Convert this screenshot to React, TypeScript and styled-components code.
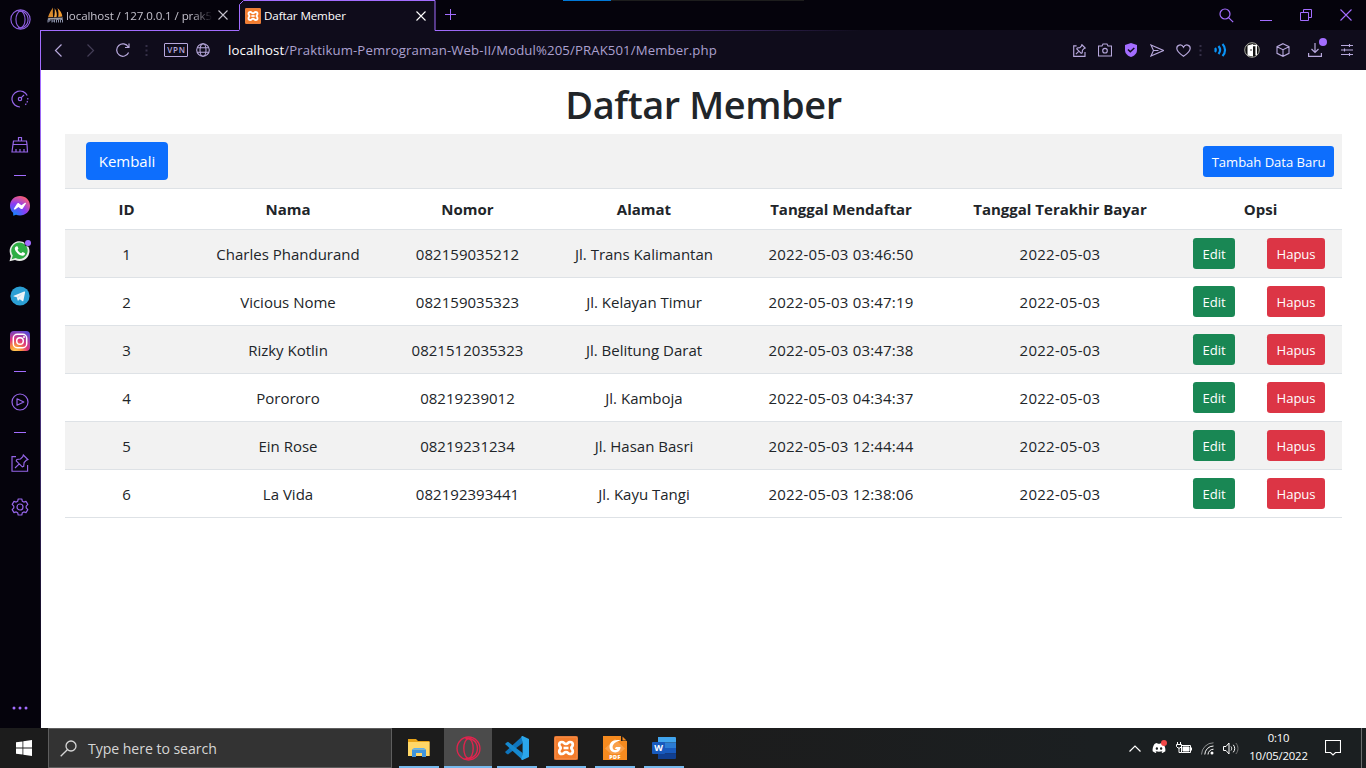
import React from "react";
import styled, { createGlobalStyle, css } from "styled-components";
import { FaDiscord } from "react-icons/fa";

const GlobalStyle = createGlobalStyle`
  * { box-sizing: border-box; }
  body {
    margin: 0;
    overflow: hidden;
    font-family: "Open Sans", "Noto Sans", sans-serif;
    color: #212529;
    background: #fff;
  }
  svg { display: block; flex: none; }
`;

const violet = "#a36dff";
const lilac = "#b7a8dc";

/* ---------- frame ---------- */
const Screen = styled.div`
  width: 1366px;
  height: 768px;
  display: flex;
  flex-direction: column;
`;
const Browser = styled.div`
  flex: 1;
  min-height: 0;
  display: flex;
  background: #05030c;
`;
const Column = styled.div`
  flex: 1;
  min-width: 0;
  display: flex;
  flex-direction: column;
`;

/* ---------- side bar ---------- */
const SideBar = styled.nav`
  width: 40px;
  display: flex;
  flex-direction: column;
  color: #9565e8;
  padding-bottom: 10px;
`;
const SideSlot = styled.div<{ $h: number; $gap?: number; $last?: boolean }>`
  height: ${(p) => p.$h}px;
  margin-top: ${(p) => (p.$last ? "auto" : `${p.$gap ?? 0}px`)};
  display: flex;
  align-items: center;
  justify-content: center;
  flex: none;
`;
const SideDash = styled.span`
  width: 12px;
  height: 1px;
  background: ${violet};
`;
const SideEdge = styled.div`
  width: 1px;
  margin-top: 30px;
  background: linear-gradient(${violet} 0, ${violet} 60px, #3b2a68 430px, #0b0716 640px);
`;

/* ---------- tab strip ---------- */
const TabStrip = styled.div`
  height: 31px;
  display: flex;
  position: relative;
  flex: none;
`;
const Tab = styled.div<{ $active?: boolean }>`
  width: ${(p) => (p.$active ? 197 : 198)}px;
  height: 31px;
  display: flex;
  align-items: center;
  position: relative;
  padding: 0 10px 0 6px;
  font-size: 11.6px;
  letter-spacing: -0.1px;
  color: ${(p) => (p.$active ? "#fff" : "#c4c1cc")};
  ${(p) => !p.$active && css`border-bottom: 1px solid ${violet};`}
`;
const TabShape = styled.svg`
  position: absolute;
  inset: 0;
`;
const TabTitle = styled.span<{ $fade?: boolean }>`
  position: relative;
  flex: 1;
  margin-left: 3px;
  white-space: nowrap;
  ${(p) => p.$fade && css`
    flex: none;
    width: 148px;
    margin-left: 2px;
    margin-right: 4px;
    mask-image: linear-gradient(90deg, #000 126px, transparent 147px);
  `}
`;
const TabIcon = styled.span`
  position: relative;
  display: flex;
`;
const StripRest = styled.div`
  flex: 1;
  display: flex;
  align-items: center;
  padding-left: 9px;
  color: ${violet};
  border-bottom: 1px solid;
  border-image: linear-gradient(90deg, ${violet}, #5c3d98 190px, #0f0c1b 425px) 1;
`;
const PlusSlot = styled.span`
  display: flex;
  padding-bottom: 2px;
`;
const TopProgress = styled.div`
  position: absolute;
  top: 0;
  left: 522px;
  width: 241px;
  height: 1px;
  background: linear-gradient(90deg, #0078d7 48px, #1d1d1d 48px);
`;
const WindowButtons = styled.div`
  display: flex;
  margin-left: auto;
`;
const WindowButton = styled.span`
  width: 40px;
  height: 28px;
  display: flex;
  align-items: center;
  justify-content: center;
`;

/* ---------- address bar ---------- */
const AddressBar = styled.div`
  height: 39px;
  display: flex;
  align-items: center;
  padding: 0 4px 1px 0;
  background: #0f0c1b;
  color: ${lilac};
  flex: none;
`;
const ToolSlot = styled.span<{ $w: number; $dim?: boolean }>`
  width: ${(p) => p.$w}px;
  height: 38px;
  display: flex;
  align-items: center;
  justify-content: center;
  position: relative;
  flex: none;
  color: ${(p) => (p.$dim ? "#443e57" : "inherit")};
`;
const Vpn = styled.span`
  width: 24px;
  height: 14px;
  margin-left: 11px;
  border: 1px solid ${lilac};
  border-radius: 1px;
  font-size: 8px;
  font-weight: 600;
  line-height: 12px;
  letter-spacing: 0.7px;
  text-align: center;
  padding-left: 1px;
`;
const Url = styled.span`
  margin-left: 10px;
  flex: 1;
  font-size: 13.2px;
  letter-spacing: 0.11px;
  line-height: 18px;
  padding-bottom: 1px;
  white-space: nowrap;
  color: #aba0cf;
  b { font-weight: 400; color: #fff; }
`;
const Dot = styled.i`
  position: absolute;
  top: 7px;
  right: 5px;
  width: 8px;
  height: 8px;
  border-radius: 50%;
  background: ${violet};
`;

/* ---------- page ---------- */
const Page = styled.main`
  flex: 1;
  background: #fff;
  padding: 10px 24px 0;
`;
const Title = styled.h1`
  margin: 0 0 6px;
  height: 48px;
  line-height: 48px;
  font-size: 38px;
  font-weight: 600;
  letter-spacing: -0.45px;
  text-align: center;
`;
const Table = styled.table`
  width: 1277px;
  table-layout: fixed;
  border-collapse: separate;
  border-spacing: 0;
  font-size: 15px;
  line-height: 24px;
  text-align: center;
`;
const Row = styled.tr<{ $striped?: boolean; $h: number }>`
  height: ${(p) => p.$h}px;
  background: ${(p) => (p.$striped ? "#f2f2f2" : "#fff")};
`;
const cell = css`
  padding: 0;
  border-bottom: 1px solid #dee2e6;
  vertical-align: middle;
  white-space: nowrap;
`;
const Head = styled.th`
  ${cell}
  font-weight: 700;
`;
const Cell = styled.td<{ $spacing?: number }>`
  ${cell}
  letter-spacing: ${(p) => p.$spacing ?? 0}px;
`;
const Actions = styled.div<{ $ends?: boolean }>`
  display: flex;
  align-items: center;
  justify-content: space-between;
  padding: ${(p) => (p.$ends ? "0 8px 0 21px" : "0 17px 0 14px")};
`;
const tones = { primary: "#0d6efd", success: "#198754", danger: "#dc3545" };
const Button = styled.button<{ $tone: keyof typeof tones; $w: number; $large?: boolean }>`
  width: ${(p) => p.$w}px;
  height: ${(p) => (p.$large ? 38 : 31)}px;
  padding: ${(p) => (p.$large ? 0 : "1px 0 0")};
  border: 0;
  border-radius: ${(p) => (p.$large ? 4 : 3.2)}px;
  background: ${(p) => tones[p.$tone]};
  color: #fff;
  font-family: inherit;
  font-size: ${(p) => (p.$large ? 15 : 13.1)}px;
  letter-spacing: ${(p) => (p.$large ? 0 : -0.05)}px;
  white-space: nowrap;
`;

/* ---------- task bar ---------- */
const TaskBar = styled.footer`
  height: 40px;
  display: flex;
  background: linear-gradient(90deg, #1c1c1c 50%, #1b1f21 80%);
  color: #fff;
  flex: none;
`;
const Start = styled.div`
  width: 48px;
  display: flex;
  align-items: center;
  justify-content: center;
`;
const SearchBox = styled.div`
  width: 344px;
  border: 1px solid #5e5e5e;
  background: #333;
  display: flex;
  align-items: center;
  padding-left: 11px;
  gap: 11px;
  font-size: 14.1px;
  letter-spacing: -0.05px;
  color: #d6d6d6;
`;
const Apps = styled.div`
  display: flex;
  gap: 1px;
  margin-left: 3px;
`;
const AppButton = styled.div<{ $active?: boolean }>`
  width: 48px;
  display: flex;
  flex-direction: column;
  align-items: center;
  background: ${(p) => (p.$active ? "#4b4b4b" : "transparent")};
  &::after {
    content: "";
    width: ${(p) => (p.$active ? 48 : 40)}px;
    height: 2px;
    background: #76b9ed;
  }
`;
const AppIcon = styled.span`
  flex: 1;
  display: flex;
  align-items: center;
  padding-top: 2px;
`;
const Tray = styled.div`
  display: flex;
  margin-left: auto;
  align-items: center;
`;
const TraySlot = styled.span<{ $w: number }>`
  width: ${(p) => p.$w}px;
  display: flex;
  align-items: center;
  justify-content: center;
  position: relative;
`;
const Alert = styled.i`
  position: absolute;
  top: -1px;
  right: 4px;
  width: 6px;
  height: 6px;
  border-radius: 50%;
  background: #f04747;
`;
const Clock = styled.div`
  width: 70px;
  font-size: 11.3px;
  letter-spacing: -0.15px;
  line-height: 18px;
  text-align: center;
  padding: 0 0 2px 1px;
`;
const Peek = styled.div`
  width: 5px;
  height: 40px;
  margin-left: 8px;
  border-left: 1px solid #6b6d6e;
`;

/* ---------- line icons ---------- */
type LineProps = { w: number; h: number; sw?: number; color?: string; children: React.ReactNode };
const Line = ({ w, h, sw = 1.2, color = "currentColor", children }: LineProps) => (
  <svg width={w} height={h} viewBox={`0 0 ${w} ${h}`} fill="none" stroke={color} strokeWidth={sw}>
    {children}
  </svg>
);

const OperaMark = ({ size, color, inner }: { size: number; color: string; inner: number }) => (
  <svg width={size} height={size} viewBox="0 0 24 24" fill="none" stroke={color} strokeWidth={1.3}>
    <circle cx="12" cy="12" r="11" />
    <ellipse cx="12" cy="12" rx={inner} ry="9.4" />
    <path d="M9 2.6C14 .8 20.6 5 20.6 12S14 23.2 9 21.4" />
  </svg>
);

const Cross = ({ size, color }: { size: number; color?: string }) => (
  <Line w={size} h={size} color={color} sw={1.1}>
    <path d={`M.5 .5L${size - 0.5} ${size - 0.5}M${size - 0.5} .5L.5 ${size - 0.5}`} />
  </Line>
);

const PinBox = ({ size }: { size: number }) => (
  <svg width={size} height={size} viewBox="0 0 18 18" fill="none" stroke="currentColor" strokeWidth={(18 / size) * 1.15}>
    <path d="M5 2.6H1v14.6h15.6V11" />
    <path d="M12.3 1l4.6 4.6-1.4.5-2.4 2.5-.4 3.7-1.4.6-6.1-6.1.7-1.3 3.6-.5 2.3-2.4zM8.3 9.8L4 14" />
  </svg>
);

const Sail = () => (
  <svg width="17" height="16" viewBox="0 0 17 16">
    <path d="M6 .5C4 3.5 2.2 6.5 1 10.2L6.2 10C5.8 6.5 5.8 3 6 .5z" fill="#d98a2b" />
    <path d="M7.6 1.2c2 2.6 2.6 5.5 2 8.8L7 10.2C7.8 7 8 4 7.6 1.2z" fill="#f0a544" />
    <path d="M10.5 1c2.9 2.5 4.5 5.3 4.9 8.6l-4.2.4c.6-3 .3-6-.7-9z" fill="#f29a2e" />
    <path d="M.5 11l15.6-.6-1 2.2H2z" fill="#9a9aa0" />
    <path d="M1 15.5v-3h2v1.500H1m4-1.500v3m2.500-3v3M5 14h2.500m2 1.500v-3h2v3m2 0v-3h2v3" stroke="#8a90a8" fill="none" />
  </svg>
);

const XamppTile = ({ size }: { size: number }) => (
  <svg width={size} height={size} viewBox="0 0 24 24">
    <rect width="24" height="24" rx="1.5" fill="#dd6a26" />
    <rect x="1" y="1" width="22" height="22" rx="1.5" fill="#f47c2c" stroke="#f9a56b" strokeWidth=".6" />
    <path
      d="M8 6c2.200 0 1.800 2 4 2s1.800-2 4-2c1.700 0 2.800 1.200 2.800 2.800 0 1.800-1.500 2-1.500 3.200s1.500 1.400 1.500 3.200c0 1.600-1.100 2.800-2.800 2.800-2.200 0-1.800-2-4-2s-1.800 2-4 2c-1.700 0-2.800-1.200-2.800-2.800 0-1.800 1.500-2 1.500-3.200S5.200 10.600 5.200 8.800C5.200 7.200 6.300 6 8 6z"
      fill="none" stroke="#fff" strokeWidth="2.700"
    />
    <path d="M9.500 12h5" stroke="#fff" strokeWidth="2.600" />
  </svg>
);

const Grip = () => (
  <svg width="3" height="11" viewBox="0 0 3 11" fill="#352f47">
    <path d="M.5 0h2v2h-2zM.5 4.500h2v2h-2zM.5 9h2v2h-2z" />
  </svg>
);

const Messenger = () => (
  <svg width="20" height="20" viewBox="0 0 20 20">
    <defs>
      <radialGradient id="msg" cx=".2" cy="1" r="1.100">
        <stop offset="0" stopColor="#0a8bff" />
        <stop offset=".55" stopColor="#8a3cf5" />
        <stop offset="1" stopColor="#ff5f70" />
      </radialGradient>
    </defs>
    <path d="M10 0C4.400 0 0 4.100 0 9.700c0 2.900 1.200 5.400 3.100 7.100l.2 3 2.700-1c1.200.4 2.600.6 4 .6 5.600 0 10-4.100 10-9.700S15.600 0 10 0z" fill="url(#msg)" />
    <path d="M4 12.500l3-4.700c.5-.7 1.400-.9 2.100-.4l2.300 1.800 3.300-2.300c.8-.5 1.600.2 1.100.9l-3 4.600c-.5.7-1.400.9-2.100.4L8.500 11l-3.400 2.400c-.8.500-1.600-.2-1.100-.9z" fill="#fff" />
  </svg>
);

const WhatsApp = () => (
  <svg width="22" height="22" viewBox="0 0 22 22">
    <path d="M.5 21.300l1.400-5.400A9.900 9.900 0 1 1 6 19.900z" fill="#e9ece9" />
    <path d="M2.700 19.200l1.100-3.700A8.200 8.200 0 1 1 6.700 18z" fill="#2fae45" />
    <path d="M7.900 6.300c.4 0 .6 0 .8.500l.7 1.600c.2.400-.7 1.200-.8 1.500.8 1.600 2 2.700 3.600 3.400.4.100 1.100-1.200 1.500-1.200l2 .9c.5.200.2 1.500-.2 2-1.100 1.200-3 .8-4.700 0-2.300-1.100-5-4.200-5-6.400 0-1 .9-2.300 2.100-2.300z" fill="#fff" />
    <circle cx="19" cy="3" r="3.600" fill="#05030c" />
    <circle cx="19" cy="3" r="3" fill={violet} />
  </svg>
);

const Telegram = () => (
  <svg width="20" height="20" viewBox="0 0 20 20">
    <circle cx="10" cy="10" r="9.600" fill="#2b9fd4" />
    <path d="M3.800 9.800l10.400-4.300c.7-.2 1 .1.900.8l-1.700 8.400c-.2.700-.6.800-1.200.4l-2.500-1.800-1.300 1.200c-.4.400-.7.200-.8-.2l-.8-3.100-2.900-.7c-.5-.2-.6-.5-.1-.7z" fill="#eef4f8" />
    <path d="M7.200 11.200l5.200-3.600-4.200 4.200z" fill="#b9d5e4" />
  </svg>
);

const Instagram = () => (
  <svg width="20" height="20" viewBox="0 0 20 20" fill="none">
    <defs>
      <radialGradient id="ig" cx=".25" cy="1.050" r="1.150">
        <stop offset="0" stopColor="#ffd35a" />
        <stop offset=".25" stopColor="#fb9a3c" />
        <stop offset=".55" stopColor="#e0357a" />
        <stop offset="1" stopColor="#5b4ad6" />
      </radialGradient>
    </defs>
    <rect width="20" height="20" rx="4" fill="url(#ig)" />
    <rect x="3.300" y="3.300" width="13.400" height="13.400" rx="4" stroke="#fff" strokeWidth="1.500" />
    <circle cx="10" cy="10" r="3.300" stroke="#fff" strokeWidth="1.500" />
    <circle cx="14" cy="6" r="1" fill="#fff" />
  </svg>
);

const Gear = () => (
  <svg width="18" height="18" viewBox="0 0 18 18" fill="none" stroke="currentColor" strokeWidth="1.200" strokeLinejoin="round">
    <path d="M7.200 1h3.600l.5 2.200 1.500.9 2.200-.7 1.800 3-1.600 1.700v1.800l1.600 1.700-1.800 3-2.200-.7-1.500.9-.5 2.200H7.200l-.5-2.200-1.500-.9-2.200.7-1.800-3 1.600-1.700V8.100L1.200 6.400l1.800-3 2.200.7 1.500-.9z" />
    <circle cx="9" cy="9" r="3" />
  </svg>
);

/* ---------- task bar pictures ---------- */
const Folder = () => (
  <svg width="22" height="20" viewBox="0 0 22 20">
    <path d="M0 1h8l2 2h11.500v15H0z" fill="#e8a317" />
    <path d="M0 4h21.500v14H0z" fill="#ffd767" />
    <path d="M4 11.500h14V19h-4v-4H8v4H4z" fill="#3f95dc" />
    <path d="M4 11.500l2-1.500h10l2 1.500z" fill="#5fb0ee" />
  </svg>
);
const Code = () => (
  <svg width="24" height="24" viewBox="0 0 24 24">
    <path d="M17.600 0v7L3 18.400 1.400 17.600 0 16z" fill="#0f75bd" />
    <path d="M0 8l1.600-1.600L3 5.800 17.600 17v7z" fill="#1689cf" />
    <path d="M17.600 0L24 3v18l-6.400 3c-.8 0-1.200-.4-1.300-1l1.300-5V6.500l-1.300-5.400c.1-.7.500-1.100 1.300-1.100z" fill="#2ba6ea" />
  </svg>
);
const FoxitPdf = () => (
  <svg width="24" height="24" viewBox="0 0 24 24">
    <path d="M0 0h18v5h6v19H0z" fill="#f58a1f" />
    <path d="M19.500.5l4 4h-4z" fill="#f58a1f" />
    <path d="M2 12.500L12 3l10 9.500L16 18H8z" fill="#f9a04a" />
    <path d="M17.500 4.500C11 3 6.500 6 6.500 10.800c0 3.600 2.700 5.600 5.700 5.600 3.300 0 5.300-2.200 5.300-5.400h-4.600l-1 2h2.300c-.5.800-1.200 1.100-2.100 1.100-1.500 0-2.500-1.100-2.500-2.900 0-3.200 3-5.600 7.900-6.700z" fill="#fff" />
    <text x="12" y="22.600" textAnchor="middle" fontSize="5.500" fontWeight="800" fill="#fff" letterSpacing=".4">PDF</text>
  </svg>
);
const Word = () => (
  <svg width="24" height="22" viewBox="0 0 24 22">
    <path d="M6 0h17a1 1 0 0 1 1 1v4.500H6z" fill="#41a5ee" />
    <path d="M6 5.500h18V11H6z" fill="#2b7cd3" />
    <path d="M6 11h18v5.500H6z" fill="#185abd" />
    <path d="M6 16.500h18V21a1 1 0 0 1-1 1H6z" fill="#103f91" />
    <rect y="5" width="13" height="12" rx="1" fill="#185abd" />
    <text x="6.500" y="14.300" textAnchor="middle" fontSize="9" fontWeight="700" fill="#fff">W</text>
  </svg>
);

/* ---------- data ---------- */
const columns: [string, number][] = [
  ["ID", 123], ["Nama", 200], ["Nomor", 159], ["Alamat", 194],
  ["Tanggal Mendaftar", 200], ["Tanggal Terakhir Bayar", 238], ["Opsi", 163],
];
const members = [
  ["1", "Charles Phandurand", "082159035212", "Jl. Trans Kalimantan", "2022-05-03 03:46:50", "2022-05-03"],
  ["2", "Vicious Nome", "082159035323", "Jl. Kelayan Timur", "2022-05-03 03:47:19", "2022-05-03"],
  ["3", "Rizky Kotlin", "0821512035323", "Jl. Belitung Darat", "2022-05-03 03:47:38", "2022-05-03"],
  ["4", "Porororo", "08219239012", "Jl. Kamboja", "2022-05-03 04:34:37", "2022-05-03"],
  ["5", "Ein Rose", "08219231234", "Jl. Hasan Basri", "2022-05-03 12:44:44", "2022-05-03"],
  ["6", "La Vida", "082192393441", "Jl. Kayu Tangi", "2022-05-03 12:38:06", "2022-05-03"],
];
const spacings = [0, 0, 0.03, 0, 0.18, 0.25];

const Side = () => (
  <SideBar>
    <SideSlot $h={39}><OperaMark size={21} color="#8e5fe0" inner={5.2} /></SideSlot>
    <SideSlot $h={46} $gap={37}>
      <Line w={18} h={18}>
        <path d="M9 17A8 8 0 1 1 16.200 5.500" />
        <path d="M16.800 8v1.500m-.3 1.500l-.5 1.500m-.7 1.200l-1 1.200" />
        <circle cx="9" cy="9" r="1.700" /><path d="M10.300 7.700L13 5" />
      </Line>
    </SideSlot>
    <SideSlot $h={45}>
      <Line w={18} h={17}>
        <path d="M7.500 5V1.500h3V5M2.500 5h13l.5 3.500H2zM2 8.500L1 16h15.500l-.5-7.500M5 16v-3m4 3v-3m4 3v-3" />
      </Line>
    </SideSlot>
    <SideSlot $h={16}><SideDash /></SideSlot>
    <SideSlot $h={46}><Messenger /></SideSlot>
    <SideSlot $h={44}><WhatsApp /></SideSlot>
    <SideSlot $h={46}><Telegram /></SideSlot>
    <SideSlot $h={44}><Instagram /></SideSlot>
    <SideSlot $h={17}><SideDash /></SideSlot>
    <SideSlot $h={44}>
      <Line w={18} h={18}><circle cx="9" cy="9" r="8" /><path d="M6 5.800L12.800 9 6 12.200z" strokeLinejoin="round" /></Line>
    </SideSlot>
    <SideSlot $h={17}><SideDash /></SideSlot>
    <SideSlot $h={44}><PinBox size={18} /></SideSlot>
    <SideSlot $h={44}><Gear /></SideSlot>
    <SideSlot $h={20} $last>
      <svg width="16" height="4" viewBox="0 0 16 4" fill={violet}>
        <circle cx="2" cy="2" r="1.500" /><circle cx="8" cy="2" r="1.500" /><circle cx="14" cy="2" r="1.500" />
      </svg>
    </SideSlot>
  </SideBar>
);

const Tabs = () => (
  <TabStrip>
    <Tab>
      <TabIcon><Sail /></TabIcon>
      <TabTitle $fade>localhost / 127.0.0.1 / prak5</TabTitle>
      <Cross size={10} />
    </Tab>
    <Tab $active>
      <TabShape width="197" height="31" viewBox="0 0 197 31">
        <path d="M.5 31V4.500L4.500.5h191.500V31z" fill="#0f0c1b" />
        <path d="M0 30.500L.5 29.500V4.500L4.500.5h191.500v30h1" fill="none" stroke={violet} />
      </TabShape>
      <TabIcon><XamppTile size={16} /></TabIcon>
      <TabTitle>Daftar Member</TabTitle>
      <TabIcon><Cross size={10} color="#fff" /></TabIcon>
    </Tab>
    <StripRest>
      <PlusSlot><Line w={11} h={11} sw={1}><path d="M5.500 0v11M0 5.500h11" /></Line></PlusSlot>
      <WindowButtons>
        <WindowButton><Line w={15} h={15}><circle cx="6" cy="6" r="5" /><path d="M9.600 9.600l4.600 4.600" /></Line></WindowButton>
        <WindowButton><Line w={12} h={12} sw={1}><path d="M0 11.500h12" /></Line></WindowButton>
        <WindowButton><Line w={12} h={12} sw={1}><path d="M.5 3.500h8v8h-8zM3.500 3.500v-3h8v8h-3" /></Line></WindowButton>
        <WindowButton><Cross size={12} /></WindowButton>
      </WindowButtons>
    </StripRest>
    <TopProgress />
  </TabStrip>
);

const Address = () => (
  <AddressBar>
    <ToolSlot $w={34}><Line w={8} h={13}><path d="M7.500.5l-6 6 6 6" /></Line></ToolSlot>
    <ToolSlot $w={32} $dim><Line w={8} h={13}><path d="M.5.5l6 6-6 6" /></Line></ToolSlot>
    <ToolSlot $w={32}><Line w={14} h={14}><path d="M12.600 9.500A6.200 6.200 0 1 1 12.300 4M13 .5V4.500H9" /></Line></ToolSlot>
    <ToolSlot $w={14}><Grip /></ToolSlot>
    <Vpn>VPN</Vpn>
    <ToolSlot $w={30}>
      <Line w={14} h={14} sw={1.100}>
        <circle cx="7" cy="7" r="6.300" /><ellipse cx="7" cy="7" rx="3" ry="6.300" /><path d="M1.200 4.700h11.600M1.200 9.300h11.600" />
      </Line>
    </ToolSlot>
    <Url><b>localhost</b>/Praktikum-Pemrograman-Web-II/Modul%205/PRAK501/Member.php</Url>
    <ToolSlot $w={26}><PinBox size={13} /></ToolSlot>
    <ToolSlot $w={26}>
      <Line w={14} h={14} sw={1.100}><path d="M.5 3h3.500l1-2h4l1 2h3.500v10H.5z" /><circle cx="7" cy="7.700" r="2.300" /></Line>
    </ToolSlot>
    <ToolSlot $w={26}>
      <svg width="12" height="14" viewBox="0 0 12 14"><path d="M6 0l6 2v5c0 3.500-2.500 5.800-6 7-3.500-1.200-6-3.500-6-7V2z" fill={violet} /><path d="M3 6.500l2.300 2.300L9.300 5" fill="none" stroke="#0f0c1b" strokeWidth="1.500" /></svg>
    </ToolSlot>
    <ToolSlot $w={26}><Line w={14} h={13} sw={1.100}><path d="M1 1l12.500 5.500L1 12l2.500-5.500zM3.500 6.500h5" /></Line></ToolSlot>
    <ToolSlot $w={26}><Line w={15} h={13}><path d="M7.500 12.200C3.500 9.500.8 7 .8 4.200.8 1 5.500-.6 7.500 3.200 9.500-.6 14.200 1 14.200 4.200c0 2.800-2.700 5.300-6.700 8z" /></Line></ToolSlot>
    <ToolSlot $w={9}><Grip /></ToolSlot>
    <ToolSlot $w={32}>
      <Line w={14} h={14} sw={2.200} color="#0a93f5"><path d="M1 5c1 1.300 1 2.700 0 4M4.500 3c2 2.500 2 5.500 0 8M8.500 1c3.400 3.500 3.400 8.500 0 12" /></Line>
    </ToolSlot>
    <ToolSlot $w={30}>
      <svg width="16" height="16" viewBox="0 0 16 16"><circle cx="8" cy="8" r="7.300" fill="#111" stroke="#a5a69c" /><path d="M3.500 3.500L9 2v12.500l-5.500-1z" fill="#fff" /><path d="M9 3.500h3.200v9.700" fill="none" stroke="#fff" strokeWidth="1.600" /><circle cx="7" cy="8" r=".8" fill="#111" /></svg>
    </ToolSlot>
    <ToolSlot $w={31}><Line w={14} h={14} sw={1.100}><path d="M7 .7l6 3v6.600l-6 3-6-3V3.700zM1 3.700l6 3 6-3M7 6.700v6.600" /></Line></ToolSlot>
    <ToolSlot $w={34}><Line w={14} h={14}><path d="M7 0v9.500M3.500 6L7 9.500 10.500 6M.6 10v3.400h12.800V10" /></Line><Dot /></ToolSlot>
    <ToolSlot $w={30}><Line w={12} h={12} sw={1.100}><path d="M0 1.500h12M0 6h12M0 10.500h12M8.500 0v3M3.500 4.500v3M8.500 9v3" /></Line></ToolSlot>
  </AddressBar>
);

const MemberTable = () => (
  <Table>
    <colgroup>{columns.map(([name, w]) => <col key={name} width={w} />)}</colgroup>
    <tbody>
      <Row $striped $h={55}>
        <Cell colSpan={7}>
          <Actions $ends>
            <Button $tone="primary" $w={82} $large>Kembali</Button>
            <Button $tone="primary" $w={131}>Tambah Data Baru</Button>
          </Actions>
        </Cell>
      </Row>
      <Row $h={41}>{columns.map(([name]) => <Head key={name}>{name}</Head>)}</Row>
      {members.map((m, i) => (
        <Row key={m[0]} $striped={i % 2 === 0} $h={48}>
          {m.map((value, c) => <Cell key={c} $spacing={spacings[c]}>{value}</Cell>)}
          <Cell>
            <Actions>
              <Button $tone="success" $w={42}>Edit</Button>
              <Button $tone="danger" $w={58}>Hapus</Button>
            </Actions>
          </Cell>
        </Row>
      ))}
    </tbody>
  </Table>
);

const Taskbar = () => (
  <TaskBar>
    <Start>
      <svg width="16" height="16" viewBox="0 0 16 16" fill="#fff"><path d="M0 2.300L6.500 1.400v6.200H0zM7.300 1.300L16 0v7.600H7.300zM0 8.400h6.500v6.200L0 13.700zM7.300 8.400H16V16l-8.700-1.300z" /></svg>
    </Start>
    <SearchBox>
      <Line w={17} h={17} sw={1.300}><circle cx="11" cy="6" r="5" /><path d="M7.300 9.700L.7 16.300" /></Line>
      Type here to search
    </SearchBox>
    <Apps>
      <AppButton><AppIcon><Folder /></AppIcon></AppButton>
      <AppButton $active><AppIcon><OperaMark size={25} color="#e0244e" inner={4.500} /></AppIcon></AppButton>
      <AppButton><AppIcon><Code /></AppIcon></AppButton>
      <AppButton><AppIcon><XamppTile size={24} /></AppIcon></AppButton>
      <AppButton><AppIcon><FoxitPdf /></AppIcon></AppButton>
      <AppButton><AppIcon><Word /></AppIcon></AppButton>
    </Apps>
    <Tray>
      <TraySlot $w={24}><Line w={12} h={7}><path d="M.5 6.500L6 1l5.500 5.500" /></Line></TraySlot>
      <TraySlot $w={24}><FaDiscord size={14} /><Alert /></TraySlot>
      <TraySlot $w={25}>
        <Line w={16} h={12} sw={1}><path d="M5.500 3.500h9v7h-9z" /><path d="M7 5h6v4H7z" fill="currentColor" /><path d="M15.500 5.500v3M1.500 0v2M4.500 0v2M.5 2.500h5v2l-1.500 1.500h-2L.5 4.500zM3 6v4.500h2.500" /></Line>
      </TraySlot>
      <TraySlot $w={23}>
        <Line w={13} h={13} sw={1}><path d="M.5 12.500A12 12 0 0 1 12.500 .8" stroke="#8b8d8e" /><path d="M3.800 12.500A8.700 8.700 0 0 1 12.500 4M7 12.500a5.500 5.500 0 0 1 5.500-5.300" /><circle cx="11" cy="11" r="1.500" fill="currentColor" stroke="none" /></Line>
      </TraySlot>
      <TraySlot $w={24}>
        <Line w={16} h={13} sw={1}><path d="M.5 4.500h2.500L6 1v11L3 8.500H.5zM8 4.500c.9 1.300.9 2.700 0 4M10.300 2.800c1.900 2.300 1.900 5.200 0 7.500" /><path d="M12.800 1c2.900 3.300 2.900 7.700 0 11" stroke="#777" /></Line>
      </TraySlot>
      <Clock>0:10<br />10/05/2022</Clock>
      <TraySlot $w={40}><Line w={16} h={16} sw={1.100}><path d="M.5.500h15v12H10.500L8 15 5.500 12.500H.5z" /></Line></TraySlot>
      <Peek />
    </Tray>
  </TaskBar>
);

export default function App() {
  return (
    <Screen>
      <GlobalStyle />
      <Browser>
        <Side />
        <SideEdge />
        <Column>
          <Tabs />
          <Address />
          <Page>
            <Title>Daftar Member</Title>
            <MemberTable />
          </Page>
        </Column>
      </Browser>
      <Taskbar />
    </Screen>
  );
}
